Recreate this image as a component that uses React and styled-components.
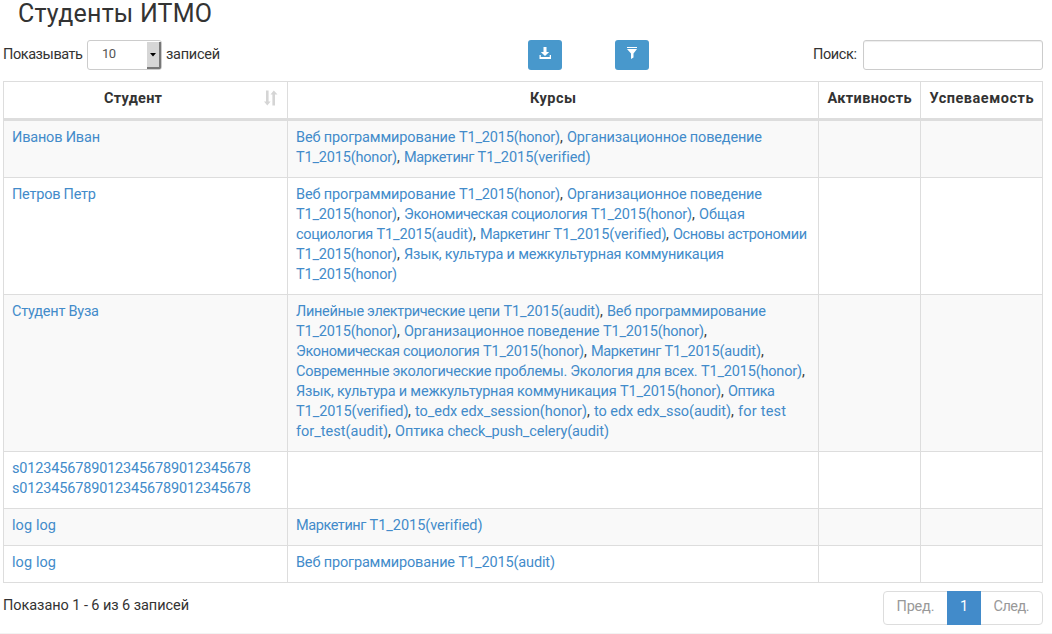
import React, { useLayoutEffect, useRef } from "react";
import styled, { createGlobalStyle, css } from "styled-components";

const GlobalStyle = createGlobalStyle`
  * { box-sizing: border-box; }
  html, body { margin: 0; padding: 0; background: #fff; }
  body {
    font-family: Roboto, "Liberation Sans", sans-serif;
    font-size: 14.5px;
    line-height: 20px;
    color: #333;
    overflow: hidden;
  }
`;

const FitText = styled.span`
  display: inline-block;
  white-space: pre;
  width: ${(p) => p.$width}px;
`;

/* Tracks the text so that it fills the given width. */
function Fit({ width, children }) {
  const text = useRef(null);
  useLayoutEffect(() => {
    text.current.style.letterSpacing = "0px";
    const natural = text.current.getBoundingClientRect().width;
    const gaps = children.length - 1;
    if (gaps > 0) text.current.style.letterSpacing = `${(width - natural) / gaps}px`;
  }, [width, children]);
  return (
    <FitText $width={width}>
      <span ref={text}>{children}</span>
    </FitText>
  );
}

const Page = styled.main`
  width: 1052px;
  height: 634px;
  padding: 0 9px 0 3px;
  display: flex;
  flex-direction: column;
  border-bottom: 1px solid #f3f3f3;
`;

const Title = styled.h1`
  margin: 0;
  padding-left: 15px;
  height: 40px;
  font-size: 25px;
  font-weight: 400;
  line-height: 28px;
`;

const Toolbar = styled.div`
  display: grid;
  grid-template-columns: 525px 87px 198px 230px;
  height: 41px;
  align-items: start;
`;

const Field = styled.div`
  display: flex;
  align-items: center;
  height: 30px;
  line-height: 28px;
  ${(p) => p.$end && css`justify-content: flex-end;`}
`;

const SelectBox = styled.div`
  display: flex;
  justify-content: space-between;
  width: 75px;
  height: 30px;
  margin: 0 4px 0 4px;
  padding: 1px 0 0 14px;
  border: 1px solid #ccc;
  border-radius: 3px;
  color: #555;
  font-size: 13px;
  line-height: 24px;
`;

const SelectArrow = styled.div`
  display: flex;
  align-items: center;
  justify-content: center;
  width: 14px;
  height: 27px;
  background: #d6d6d6;
  border-right: 2px solid #777;
  border-bottom: 2px solid #777;
  border-radius: 0 0 2px 0;
`;

const SearchInput = styled.input`
  width: 180px;
  height: 30px;
  margin-left: 6px;
  border: 1px solid #ccc;
  border-radius: 3px;
  box-shadow: inset 0 1px 1px rgba(0, 0, 0, 0.075);
  outline: none;
`;

const IconButton = styled.button`
  display: flex;
  justify-content: center;
  width: 34px;
  height: 30px;
  padding: 6px 0 0;
  border: 0;
  border-radius: 3px;
  background: #4898cc;
`;

const Table = styled.div`
  border: 1px solid #ddd;
  width: 1040px;
`;

const Row = styled.div`
  display: grid;
  grid-template-columns: 284px 531px 102px 121px;
  background: ${(p) => (p.$striped ? "#f9f9f9" : "#fff")};
  border-bottom: 1px solid #ddd;
  &:last-child { border-bottom: 0; }
`;

const HeadRow = styled(Row)`
  height: 39px;
  border-bottom: 3px solid #ddd;
  font-weight: 700;
`;

const Cell = styled.div`
  padding: 7px 8px 9px;
  border-right: 1px solid #ddd;
  &:last-child { border-right: 0; }
`;

const HeadCell = styled(Cell)`
  display: flex;
  justify-content: ${(p) => (p.$sortable ? "flex-end" : "center")};
  gap: 101px;
  line-height: 19px;
  white-space: nowrap;
`;

const Line = styled.div`
  display: flex;
  height: 20px;
  white-space: pre;
`;

const Part = styled.span`
  display: flex;
  width: ${(p) => p.$width}px;
  flex: none;
`;

const Link = styled.a`
  color: #428bca;
  text-decoration: none;
`;

const Footer = styled.footer`
  display: flex;
  justify-content: space-between;
  padding-top: 8px;
`;

const Info = styled.div`
  line-height: 29px;
`;

const Pager = styled.nav`
  display: flex;
  width: 160px;
  height: 34px;
  border: 1px solid #ddd;
  border-radius: 4px;
`;

const PageItem = styled.span`
  display: flex;
  justify-content: center;
  width: ${(p) => p.$width}px;
  margin: ${(p) => (p.$active ? "-1px 0" : "0")};
  line-height: ${(p) => (p.$active ? 31 : 29)}px;
  color: ${(p) => (p.$active ? "#fff" : "#999")};
  background: ${(p) => (p.$active ? "#428bca" : "transparent")};
`;

const COURSES_LEFT = 296;

/* Each line is a list of [text, start, end, followed by comma]. */
const rows = [
  {
    names: [["Иванов Иван", 88]],
    lines: [
      [["Веб программирование T1_2015(honor)", 296, 560, 1], ["Организационное поведение", 567, 762]],
      [["T1_2015(honor)", 296, 397, 1], ["Маркетинг T1_2015(verified)", 404, 590]],
    ],
  },
  {
    names: [["Петров Петр", 84]],
    lines: [
      [["Веб программирование T1_2015(honor)", 296, 560, 1], ["Организационное поведение", 567, 762]],
      [["T1_2015(honor)", 296, 397, 1], ["Экономическая социология T1_2015(honor)", 404, 692, 1], ["Общая", 699, 745]],
      [["социология T1_2015(audit)", 296, 473, 1], ["Маркетинг T1_2015(verified)", 480, 666, 1], ["Основы астрономии", 673, 807]],
      [["T1_2015(honor)", 296, 397, 1], ["Язык, культура и межкультурная коммуникация", 404, 724]],
      [["T1_2015(honor)", 296, 397]],
    ],
  },
  {
    names: [["Студент Вуза", 87]],
    lines: [
      [["Линейные электрические цепи T1_2015(audit)", 296, 600, 1], ["Веб программирование", 607, 766]],
      [["T1_2015(honor)", 296, 397, 1], ["Организационное поведение T1_2015(honor)", 404, 704, 1]],
      [["Экономическая социология T1_2015(honor)", 296, 584, 1], ["Маркетинг T1_2015(audit)", 591, 761, 1]],
      [["Современные экологические проблемы. Экология для всех. T1_2015(honor)", 296, 802, 1]],
      [["Язык, культура и межкультурная коммуникация T1_2015(honor)", 296, 721, 1], ["Оптика", 728, 775]],
      [["T1_2015(verified)", 296, 408, 1], ["to_edx edx_session(honor)", 415, 587, 1], ["to edx edx_sso(audit)", 594, 731, 1], ["for test", 738, 786]],
      [["for_test(audit)", 296, 388, 1], ["Оптика check_push_celery(audit)", 395, 609]],
    ],
  },
  {
    names: [["s01234567890123456789012345678", 239], ["s01234567890123456789012345678", 239]],
    lines: [],
  },
  { names: [["log log", 44]], lines: [[["Маркетинг T1_2015(verified)", 296, 482]]] },
  { names: [["log log", 44]], lines: [[["Веб программирование T1_2015(audit)", 296, 555]]] },
];

/* Width that the course run code takes at the end of a title. */
const CODE_WIDTH = {
  "T1_2015(honor)": 101,
  "T1_2015(audit)": 96.5,
  "T1_2015(verified)": 112.5,
};

function CourseLink({ text, width }) {
  const cut = text.lastIndexOf(" ") + 1;
  const codeWidth = CODE_WIDTH[text.slice(cut)];
  if (!cut || !codeWidth) return <Link><Fit width={width}>{text}</Fit></Link>;
  return (
    <Link>
      <Fit width={width - codeWidth}>{text.slice(0, cut)}</Fit>
      <Fit width={codeWidth}>{text.slice(cut)}</Fit>
    </Link>
  );
}

function CourseLine({ parts }) {
  return (
    <Line>
      {parts.map(([text, start, end, comma], i) => {
        const next = parts[i + 1] ? parts[i + 1][1] : end + 7;
        return (
          <Part key={start} $width={next - (i === 0 ? COURSES_LEFT : start)}>
            <CourseLink text={text} width={end - start} />
            {comma ? ", " : null}
          </Part>
        );
      })}
    </Line>
  );
}

const SortIcon = () => (
  <svg width="16" height="18" viewBox="0 0 16 18" fill="#d5d5d5">
    <path d="M3 1.5h2.6v11h2L4.3 16.5 1 12.5h2z" />
    <path d="M9.4 16.5h2.6v-11h2.5L10.8 1.5 7.5 5.5h1.9z" />
  </svg>
);

const DownloadIcon = () => (
  <svg width="12" height="14" viewBox="0 0 12 14" fill="#fff">
    <path d="M4.5 1h3v5h2.7L6 10 1.8 6h2.7z" />
    <path d="M.5 9h1.3v2h8.9V9H12v4H.5z" />
  </svg>
);

const FilterIcon = () => (
  <svg width="12" height="14" viewBox="0 0 12 14" fill="#fff">
    <path d="M1 1h10v1H1zM1 3h10L7.5 7.4v4L5 13V7.4z" />
  </svg>
);

export default function App() {
  return (
    <>
      <GlobalStyle />
      <Page>
        <Title><Fit width={194}>Студенты ИТМО</Fit></Title>
        <Toolbar>
          <Field>
            <Fit width={80}>Показывать</Fit>
            <SelectBox>
              <Fit width={14}>10</Fit>
              <SelectArrow>
                <svg width="6" height="4" viewBox="0 0 6 4"><path d="M0 0h6L3 3.5z" /></svg>
              </SelectArrow>
            </SelectBox>
            <Fit width={54}>записей</Fit>
          </Field>
          <IconButton aria-label="Скачать"><DownloadIcon /></IconButton>
          <IconButton aria-label="Фильтр"><FilterIcon /></IconButton>
          <Field $end>
            <Fit width={44}>Поиск:</Fit>
            <SearchInput />
          </Field>
        </Toolbar>
        <Table>
          <HeadRow>
            <HeadCell $sortable><Fit width={58}>Студент</Fit><SortIcon /></HeadCell>
            <HeadCell><Fit width={46}>Курсы</Fit></HeadCell>
            <HeadCell><Fit width={84}>Активность</Fit></HeadCell>
            <HeadCell><Fit width={104}>Успеваемость</Fit></HeadCell>
          </HeadRow>
          {rows.map((row, i) => (
            <Row key={i} $striped={i % 2 === 0}>
              <Cell>
                {row.names.map(([name, width], n) => (
                  <Line key={n}><Link><Fit width={width}>{name}</Fit></Link></Line>
                ))}
              </Cell>
              <Cell>
                {row.lines.map((parts, n) => <CourseLine key={n} parts={parts} />)}
              </Cell>
              <Cell />
              <Cell />
            </Row>
          ))}
        </Table>
        <Footer>
          <Info><Fit width={186}>Показано 1 - 6 из 6 записей</Fit></Info>
          <Pager>
            <PageItem $width={63}><Fit width={38}>Пред.</Fit></PageItem>
            <PageItem $width={34} $active>1</PageItem>
            <PageItem $width={61}><Fit width={36}>След.</Fit></PageItem>
          </Pager>
        </Footer>
      </Page>
    </>
  );
}
